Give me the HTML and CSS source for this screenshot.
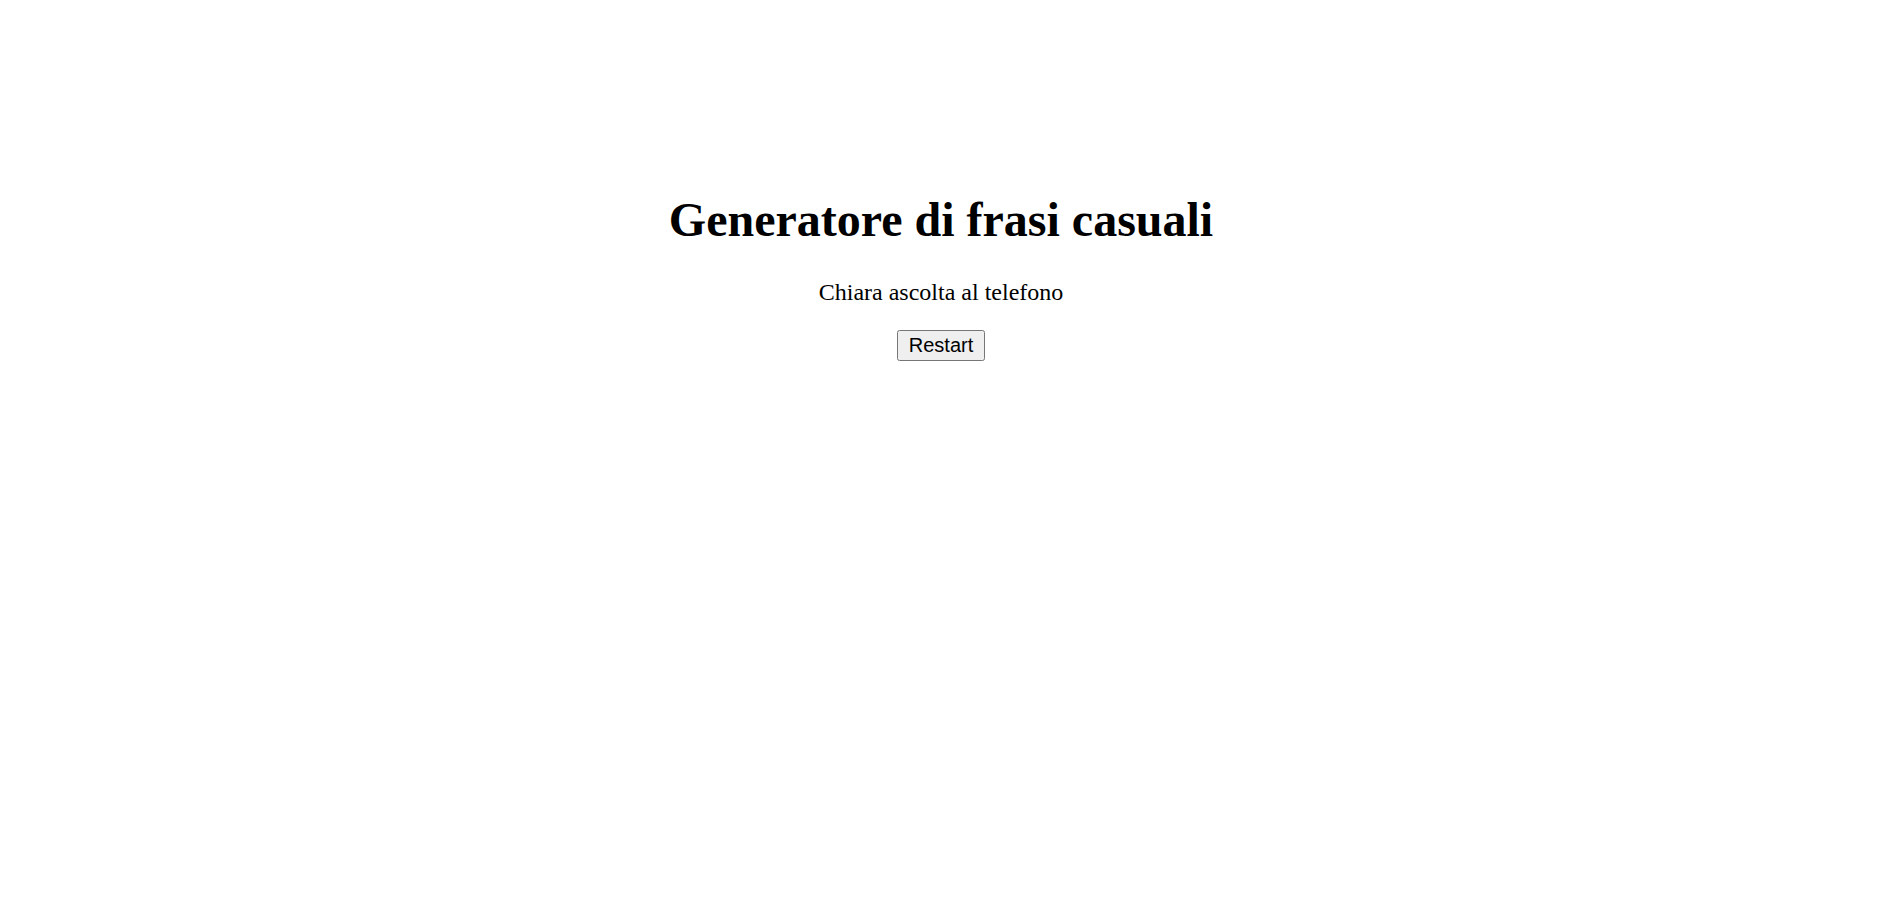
FILE: index.html
```html
<!DOCTYPE html>
<html lang="it">
<head>
<meta charset="utf-8">
<title>Generatore di frasi casuali</title>
<link rel="stylesheet" href="styles.css">
</head>
<body>
<main class="app">
  <h1 class="title">Generatore di frasi casuali</h1>
  <p class="phrase">Chiara ascolta al telefono</p>
  <button class="restart" type="button">Restart</button>
</main>
</body>
</html>
```
FILE: styles.css
```css
body {
  margin: 0;
  font-family: "Liberation Serif", "Times New Roman", serif;
  color: #000;
  background: #fff;
}
.app {
  padding-top: 160px;
  padding-right: 9px;
  text-align: center;
}
.title {
  font-size: 48px;
  font-weight: bold;
  margin: 32px 0;
}
.phrase {
  font-size: 24px;
  margin: 24px 0;
}
.restart {
  font-family: "Liberation Sans", Arial, sans-serif;
  font-size: 20px;
  padding: 2px 10px;
}
```
